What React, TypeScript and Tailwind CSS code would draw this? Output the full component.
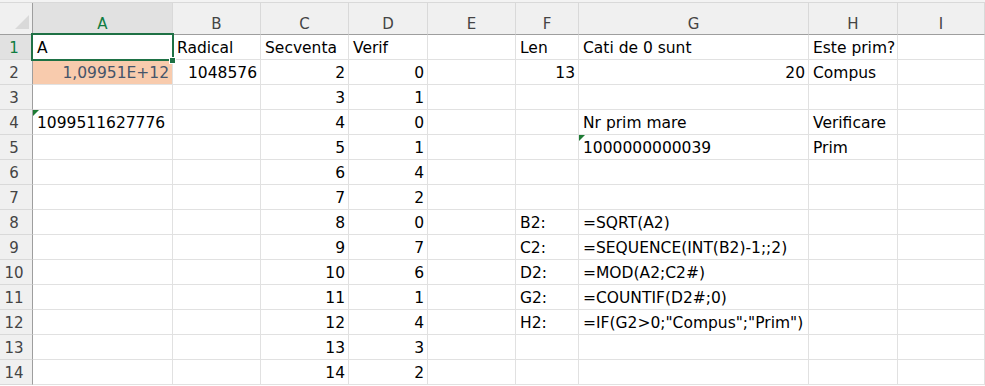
type ColKey = "A" | "B" | "C" | "D" | "E" | "F" | "G" | "H" | "I";

type Cell = {
  v: string;
  right?: boolean;
  flag?: boolean;
  cls?: string;
};

const COLS: ColKey[] = ["A", "B", "C", "D", "E", "F", "G", "H", "I"];

// Verif column: A2 mod each value of the sequence
const VERIF = [0, 1, 0, 1, 4, 2, 0, 7, 6, 1, 4, 3, 2];

const sheet: Record<number, Partial<Record<ColKey, Cell>>> = {
  1: {
    A: { v: "A" },
    B: { v: "Radical" },
    C: { v: "Secventa" },
    D: { v: "Verif" },
    F: { v: "Len" },
    G: { v: "Cati de 0 sunt" },
    H: { v: "Este prim?" },
  },
  2: {
    A: { v: "1,09951E+12", right: true, cls: "bg-[#f8cbad] text-[#44546a]" },
    B: { v: "1048576", right: true },
    F: { v: "13", right: true },
    G: { v: "20", right: true },
    H: { v: "Compus" },
  },
  4: {
    A: { v: "1099511627776", flag: true },
    G: { v: "Nr prim mare" },
    H: { v: "Verificare" },
  },
  5: {
    G: { v: "1000000000039", flag: true },
    H: { v: "Prim" },
  },
  8: { F: { v: "B2:" }, G: { v: "=SQRT(A2)" } },
  9: { F: { v: "C2:" }, G: { v: "=SEQUENCE(INT(B2)-1;;2)" } },
  10: { F: { v: "D2:" }, G: { v: "=MOD(A2;C2#)" } },
  11: { F: { v: "G2:" }, G: { v: "=COUNTIF(D2#;0)" } },
  12: { F: { v: "H2:" }, G: { v: '=IF(G2>0;"Compus";"Prim")' } },
};

// spill ranges for C2# and D2#
VERIF.forEach((d, i) => {
  const row = i + 2;
  sheet[row] = sheet[row] || {};
  sheet[row].C = { v: String(row), right: true };
  sheet[row].D = { v: String(d), right: true };
});

const ROWS = Array.from({ length: 14 }, (_, i) => i + 1);

function CornerCell() {
  return (
    <div className="h-[32px] bg-[#f0f0f0] border-r border-b border-[#9e9e9e]">
      <svg width="32" height="31" viewBox="0 0 32 31">
        <polygon points="15,26 29,26 29,12" fill="#d9d9d9" />
      </svg>
    </div>
  );
}

function ColHeader({ col }: { col: ColKey }) {
  const active = col === "A";
  return (
    <div
      className={
        "h-[32px] flex items-end justify-center border-r border-b border-r-[#d9d9d9] border-b-[#9e9e9e] leading-[20px] text-[15px] " +
        (active ? "bg-[#e1e1e1] text-[#107c41]" : "bg-[#f0f0f0] text-[#444]")
      }
    >
      {col}
    </div>
  );
}

function RowHeader({ n }: { n: number }) {
  const active = n === 1;
  return (
    <div
      className={
        "h-[25px] pt-[2px] pr-[4px] text-center leading-[22px] text-[15px] border-r border-b border-r-[#9e9e9e] border-b-[#d9d9d9] " +
        (active ? "bg-[#e1e1e1] text-[#107c41]" : "bg-[#f0f0f0] text-[#444]")
      }
    >
      {n}
    </div>
  );
}

function SheetCell({ cell }: { cell?: Cell }) {
  return (
    <div
      className={
        "h-[25px] pt-[2px] border-r border-b border-[#e1e1e1] leading-[22px] whitespace-nowrap text-[15.5px] " +
        (cell?.right ? "text-right pr-[3px] " : "pl-[4px] ") +
        (cell?.flag ? "relative " : "") +
        (cell?.cls ?? "text-black")
      }
    >
      {cell?.flag && (
        <span className="absolute left-0 top-0 w-0 h-0 border-t-[6px] border-r-[6px] border-t-[#1e7b34] border-r-transparent" />
      )}
      {cell?.v}
    </div>
  );
}

export default function App() {
  return (
    <div className="relative w-[985px] h-[386px] overflow-hidden bg-white font-['DejaVu_Sans','Liberation_Sans',sans-serif]">
      <div className="h-[3px] bg-[#f3f3f3] border-b border-[#d9d9d9]" />
      <div className="grid grid-cols-[33px_140px_88px_88px_79px_88px_63px_230px_89px_1fr]">
        <CornerCell />
        {COLS.map((c) => (
          <ColHeader key={c} col={c} />
        ))}
        {ROWS.map((r) => (
          <div key={r} className="contents">
            <RowHeader n={r} />
            {COLS.map((c) => (
              <SheetCell key={c} cell={sheet[r]?.[c]} />
            ))}
          </div>
        ))}
      </div>

      {/* active cell A1 */}
      <div className="absolute left-[31px] top-[33px] w-[143px] h-[28px] border-2 border-[#1e7145]" />
      <div className="absolute left-[169px] top-[57px] w-[7px] h-[7px] bg-[#1e7145] border border-white" />
    </div>
  );
}
